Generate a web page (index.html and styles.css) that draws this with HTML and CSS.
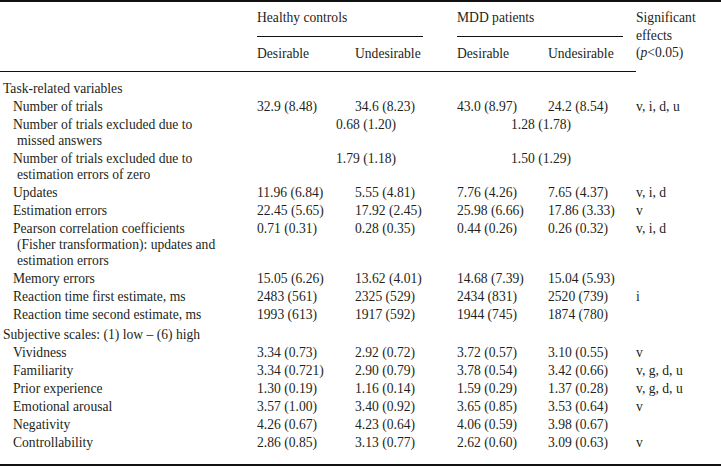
FILE: index.html
```html
<!DOCTYPE html>
<html lang="en">
<head>
<meta charset="utf-8">
<title>Table</title>
<link rel="stylesheet" href="styles.css">
</head>
<body>
<table class="results">
  <colgroup>
    <col class="c-label">
    <col class="c-hd">
    <col class="c-hu">
    <col class="c-md">
    <col class="c-mu">
    <col class="c-sig">
  </colgroup>
  <thead>
    <tr class="head-groups">
      <th class="blank"></th>
      <th colspan="2" class="group"><div class="group-label">Healthy controls</div></th>
      <th colspan="2" class="group"><div class="group-label">MDD patients</div></th>
      <th rowspan="2" class="sig-head">Significant<br>effects<br>(<i>p</i>&lt;0.05)</th>
    </tr>
    <tr class="head-cols">
      <th class="blank"></th>
      <th>Desirable</th>
      <th>Undesirable</th>
      <th>Desirable</th>
      <th>Undesirable</th>
    </tr>
  </thead>
  <tbody>
    <tr class="section first">
      <td colspan="6">Task-related variables</td>
    </tr>
    <tr>
      <td class="label">Number of trials</td>
      <td>32.9 (8.48)</td><td>34.6 (8.23)</td><td>43.0 (8.97)</td><td>24.2 (8.54)</td><td>v, i, d, u</td>
    </tr>
    <tr>
      <td class="label">Number of trials excluded due to<br>missed answers</td>
      <td colspan="2" class="merged-h">0.68 (1.20)</td>
      <td colspan="2" class="merged-m">1.28 (1.78)</td>
      <td></td>
    </tr>
    <tr>
      <td class="label">Number of trials excluded due to<br>estimation errors of zero</td>
      <td colspan="2" class="merged-h">1.79 (1.18)</td>
      <td colspan="2" class="merged-m">1.50 (1.29)</td>
      <td></td>
    </tr>
    <tr>
      <td class="label">Updates</td>
      <td>11.96 (6.84)</td><td>5.55 (4.81)</td><td>7.76 (4.26)</td><td>7.65 (4.37)</td><td>v, i, d</td>
    </tr>
    <tr>
      <td class="label">Estimation errors</td>
      <td>22.45 (5.65)</td><td>17.92 (2.45)</td><td>25.98 (6.66)</td><td>17.86 (3.33)</td><td>v</td>
    </tr>
    <tr>
      <td class="label">Pearson correlation coefficients<br>(Fisher transformation): updates and<br>estimation errors</td>
      <td>0.71 (0.31)</td><td>0.28 (0.35)</td><td>0.44 (0.26)</td><td>0.26 (0.32)</td><td>v, i, d</td>
    </tr>
    <tr>
      <td class="label">Memory errors</td>
      <td>15.05 (6.26)</td><td>13.62 (4.01)</td><td>14.68 (7.39)</td><td>15.04 (5.93)</td><td></td>
    </tr>
    <tr>
      <td class="label">Reaction time first estimate, ms</td>
      <td>2483 (561)</td><td>2325 (529)</td><td>2434 (831)</td><td>2520 (739)</td><td>i</td>
    </tr>
    <tr>
      <td class="label">Reaction time second estimate, ms</td>
      <td>1993 (613)</td><td>1917 (592)</td><td>1944 (745)</td><td>1874 (780)</td><td></td>
    </tr>
    <tr class="section">
      <td colspan="6">Subjective scales: (1) low – (6) high</td>
    </tr>
    <tr>
      <td class="label">Vividness</td>
      <td>3.34 (0.73)</td><td>2.92 (0.72)</td><td>3.72 (0.57)</td><td>3.10 (0.55)</td><td>v</td>
    </tr>
    <tr>
      <td class="label">Familiarity</td>
      <td>3.34 (0.721)</td><td>2.90 (0.79)</td><td>3.78 (0.54)</td><td>3.42 (0.66)</td><td>v, g, d, u</td>
    </tr>
    <tr>
      <td class="label">Prior experience</td>
      <td>1.30 (0.19)</td><td>1.16 (0.14)</td><td>1.59 (0.29)</td><td>1.37 (0.28)</td><td>v, g, d, u</td>
    </tr>
    <tr>
      <td class="label">Emotional arousal</td>
      <td>3.57 (1.00)</td><td>3.40 (0.92)</td><td>3.65 (0.85)</td><td>3.53 (0.64)</td><td>v</td>
    </tr>
    <tr>
      <td class="label">Negativity</td>
      <td>4.26 (0.67)</td><td>4.23 (0.64)</td><td>4.06 (0.59)</td><td>3.98 (0.67)</td><td></td>
    </tr>
    <tr class="last">
      <td class="label">Controllability</td>
      <td>2.86 (0.85)</td><td>3.13 (0.77)</td><td>2.62 (0.60)</td><td>3.09 (0.63)</td><td>v</td>
    </tr>
  </tbody>
</table>
</body>
</html>
```

FILE: styles.css
```css
html, body {
  margin: 0;
  padding: 0;
  background: #ffffff;
}

body {
  font-family: "Liberation Serif", "Times New Roman", serif;
  font-size: 13.6px;
  color: #231f20;
}

.results {
  width: 721px;
  table-layout: fixed;
  border-collapse: collapse;
  border-top: 2px solid #111;
  border-bottom: 2px solid #111;
}

.c-label { width: 257px; }
.c-hd { width: 98px; }
.c-hu { width: 102px; }
.c-md { width: 91px; }
.c-mu { width: 88px; }
.c-sig { width: 85px; }

.results th {
  font-weight: normal;
  text-align: left;
  vertical-align: top;
  padding: 0;
  line-height: 17px;
}

.head-groups th {
  padding-top: 7px;
}

.group-label {
  width: 166px;
  padding-bottom: 10px;
  border-bottom: 1px solid #111;
}

.results th.sig-head {
  line-height: 17.5px;
}

.head-cols th {
  padding-top: 8px;
  padding-bottom: 9px;
  border-bottom: 1px solid #111;
}

.results td {
  padding: 1px 0;
  line-height: 16px;
  vertical-align: top;
  white-space: nowrap;
}

.results td.label {
  padding-left: 17px;
  text-indent: -4px;
}

.results .section td {
  padding-left: 3px;
  padding-top: 3px;
}

.results .section.first td {
  padding-top: 9px;
}

.results td.merged-h {
  padding-left: 79px;
}

.results td.merged-m {
  padding-left: 54px;
}

.results .last td {
  padding-bottom: 13px;
}
```
